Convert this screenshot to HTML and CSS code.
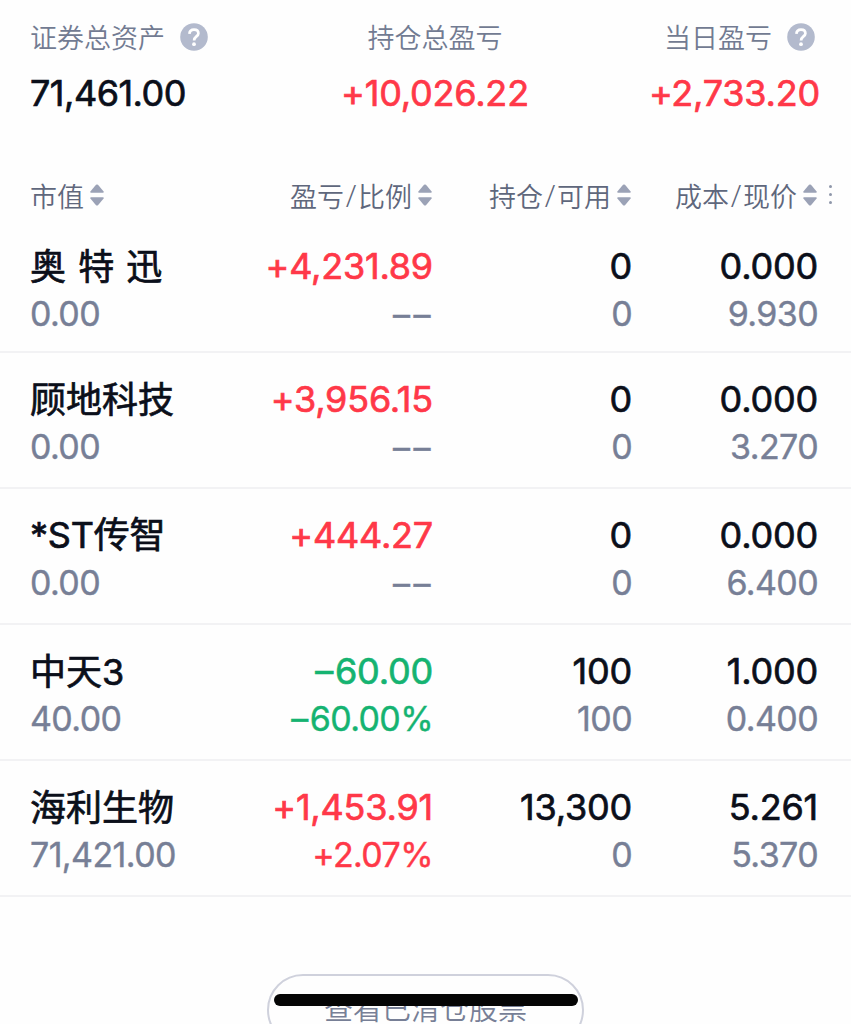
FILE: index.html
```html
<!DOCTYPE html>
<html lang="zh-CN">
<head>
    <meta charset="UTF-8">
    <title>持仓</title>
    <link rel="stylesheet" href="styles.css">
</head>
<body>
    <!-- 图标定义 -->
    <svg class="defs" width="0" height="0">
        <symbol id="sort" viewBox="0 0 16 22">
            <path d="M7 .8Q8 0 9 .8L14.6 7.4Q15 8.8 14 8.8H2Q1 8.8 1.4 7.4Z"/>
            <path d="M7 21.2Q8 22 9 21.2L14.6 14.6Q15 13.2 14 13.2H2Q1 13.2 1.4 14.6Z"/>
        </symbol>
        <symbol id="help" viewBox="0 0 28 28">
            <circle cx="14" cy="14" r="13.8"/>
            <path d="M9.4 10.9C9.6 8 11.5 6.6 14 6.6C16.6 6.6 18.4 8.1 18.4 10.4C18.4 13.4 14.1 13.5 14.1 17.4" fill="none" stroke="#fff" stroke-width="2.7"/>
            <circle cx="14" cy="21.2" r="1.9" fill="#fff"/>
        </symbol>
    </svg>

    <!-- 资产汇总 -->
    <div class="summary">
        <div class="summary-item">
            <div class="summary-label">证券总资产<svg class="help"><use href="#help"/></svg></div>
            <div class="summary-value total">71,461.00</div>
        </div>
        <div class="summary-item center">
            <div class="summary-label">持仓总盈亏</div>
            <div class="summary-value up">+10,026.22</div>
        </div>
        <div class="summary-item right">
            <div class="summary-label">当日盈亏<svg class="help"><use href="#help"/></svg></div>
            <div class="summary-value up">+2,733.20</div>
        </div>
    </div>

    <!-- 表头 -->
    <div class="table-head">
        <div class="th">市值<svg class="sort"><use href="#sort"/></svg></div>
        <div class="th">盈亏<span class="slash">/</span>比例<svg class="sort"><use href="#sort"/></svg></div>
        <div class="th">持仓<span class="slash">/</span>可用<svg class="sort"><use href="#sort"/></svg></div>
        <div class="th">成本<span class="slash">/</span>现价<svg class="sort"><use href="#sort"/></svg></div>
        <div class="more"><i></i><i></i><i></i></div>
    </div>

    <!-- 持仓列表 -->
    <div class="stock-list">
        <div class="stock first">
            <div class="cell"><div class="main name spaced">奥 特 迅</div><div class="sub">0.00</div></div>
            <div class="cell"><div class="main up">+4,231.89</div><div class="sub empty">––</div></div>
            <div class="cell"><div class="main">0</div><div class="sub">0</div></div>
            <div class="cell"><div class="main">0.000</div><div class="sub">9.930</div></div>
        </div>
        <div class="stock">
            <div class="cell"><div class="main name">顾地科技</div><div class="sub">0.00</div></div>
            <div class="cell"><div class="main up">+3,956.15</div><div class="sub empty">––</div></div>
            <div class="cell"><div class="main">0</div><div class="sub">0</div></div>
            <div class="cell"><div class="main">0.000</div><div class="sub">3.270</div></div>
        </div>
        <div class="stock">
            <div class="cell"><div class="main name latin">*ST传智</div><div class="sub">0.00</div></div>
            <div class="cell"><div class="main up">+444.27</div><div class="sub empty">––</div></div>
            <div class="cell"><div class="main">0</div><div class="sub">0</div></div>
            <div class="cell"><div class="main">0.000</div><div class="sub">6.400</div></div>
        </div>
        <div class="stock">
            <div class="cell"><div class="main name">中天3</div><div class="sub">40.00</div></div>
            <div class="cell"><div class="main down"><span class="minus">–</span>60.00</div><div class="sub down"><span class="minus">–</span>60.00%</div></div>
            <div class="cell"><div class="main">100</div><div class="sub">100</div></div>
            <div class="cell"><div class="main">1.000</div><div class="sub">0.400</div></div>
        </div>
        <div class="stock">
            <div class="cell"><div class="main name">海利生物</div><div class="sub">71,421.00</div></div>
            <div class="cell"><div class="main up">+1,453.91</div><div class="sub up">+2.07%</div></div>
            <div class="cell"><div class="main">13,300</div><div class="sub">0</div></div>
            <div class="cell"><div class="main">5.261</div><div class="sub">5.370</div></div>
        </div>
    </div>

    <div class="footer">
        <button class="cleared-btn">查看已清仓股票</button>
        <div class="home-bar"></div>
    </div>
</body>
</html>
```
FILE: styles.css
```css
* {
    box-sizing: border-box;
}
body {
    margin: 0;
    height: 1024px;
    overflow: hidden;
    background: #fefefe;
    color: #0b0f1a;
    font-family: Inter, "Noto Sans CJK SC", sans-serif;
}
.defs {
    display: block;
}

/* 资产汇总 */
.summary {
    display: grid;
    grid-template-columns: 260px 1fr 240px;
    height: 164px;
    padding: 17px 31px 0 30px;
}
.summary-label {
    display: flex;
    align-items: center;
    height: 40px;
    font-size: 27px;
    font-weight: 350;
    line-height: 36px;
    padding-bottom: 1px;
    color: #727b92;
    font-family: "Noto Sans CJK SC", sans-serif;
}
.summary-value {
    height: 44px;
    margin-top: 14px;
    line-height: 44px;
    font-size: 36px;
    font-weight: 400;
    -webkit-text-stroke: 0.7px;
    letter-spacing: -0.2px;
}
.summary-value.total {
    letter-spacing: -0.5px;
}
.center .summary-label {
    justify-content: center;
}
.center {
    text-align: center;
}
.right .summary-label {
    justify-content: flex-end;
    padding-right: 5px;
}
.right {
    text-align: right;
}
.help {
    width: 28px;
    height: 28px;
    margin-left: 15px;
    fill: #b3bacd;
}
.up, .sub.up {
    color: #ff3848;
}
.down, .sub.down {
    color: #15b371;
}

/* 表头 */
.table-head, .stock {
    display: grid;
    grid-template-columns: 200px 203px 199px 186px 1fr;
    padding-left: 30px;
}
.table-head {
    height: 63px;
}
.th {
    display: flex;
    align-items: center;
    height: 62px;
    font-size: 27px;
    font-weight: 350;
    color: #5f677c;
    white-space: nowrap;
    font-family: "Noto Sans CJK SC", sans-serif;
}
.th + .th {
    justify-content: flex-end;
}
.slash {
    width: 14px;
    font-family: "Open Sans", sans-serif;
    font-size: 31px;
    font-weight: 300;
    line-height: 30px;
    text-align: center;
}
.sort {
    flex: none;
    width: 16px;
    height: 22px;
    margin-left: 5px;
    fill: #9ba2b6;
}
.more {
    display: flex;
    flex-direction: column;
    justify-content: center;
    gap: 5px;
    height: 60px;
    padding-left: 11px;
}
.more i {
    width: 3px;
    height: 3px;
    border-radius: 50%;
    background: #8f97aa;
}

/* 持仓列表 */
.stock {
    height: 136px;
    padding-top: 22px;
    border-bottom: 2px solid #f2f2f4;
}
.stock.first {
    height: 126px;
    padding-top: 15px;
}
.cell + .cell {
    text-align: right;
}
.main {
    height: 50px;
    line-height: 48px;
    font-size: 36px;
    font-weight: 400;
    -webkit-text-stroke: 0.7px;
    letter-spacing: -0.2px;
    white-space: nowrap;
}
.main.name {
    line-height: 50px;
    letter-spacing: 0;
}
.main.latin {
    line-height: 49px;
    letter-spacing: -0.2px;
}
.spaced {
    word-spacing: 2px;
}
.sub {
    height: 46px;
    line-height: 44px;
    font-size: 34px;
    color: #777f96;
    letter-spacing: -0.6px;
    -webkit-text-stroke: 0.4px;
}
.empty {
    line-height: 46px;
    letter-spacing: 3.5px;
    margin-right: -1px;
}
.minus {
    margin-right: 2px;
}

/* 底部 */
.footer {
    position: relative;
    padding: 77px 0 0 267px;
}
.cleared-btn {
    display: block;
    width: 317px;
    height: 72px;
    padding: 0 0 5px;
    border: 2px solid #cfd1dc;
    border-radius: 36px;
    background: #fefefe;
    color: #777f96;
    font-family: "Noto Sans CJK SC", sans-serif;
    font-size: 29px;
    font-weight: 350;
    line-height: 29px;
}
.home-bar {
    position: absolute;
    top: 97px;
    left: 274px;
    width: 304px;
    height: 12px;
    border-radius: 6px;
    background: #050505;
}
```
